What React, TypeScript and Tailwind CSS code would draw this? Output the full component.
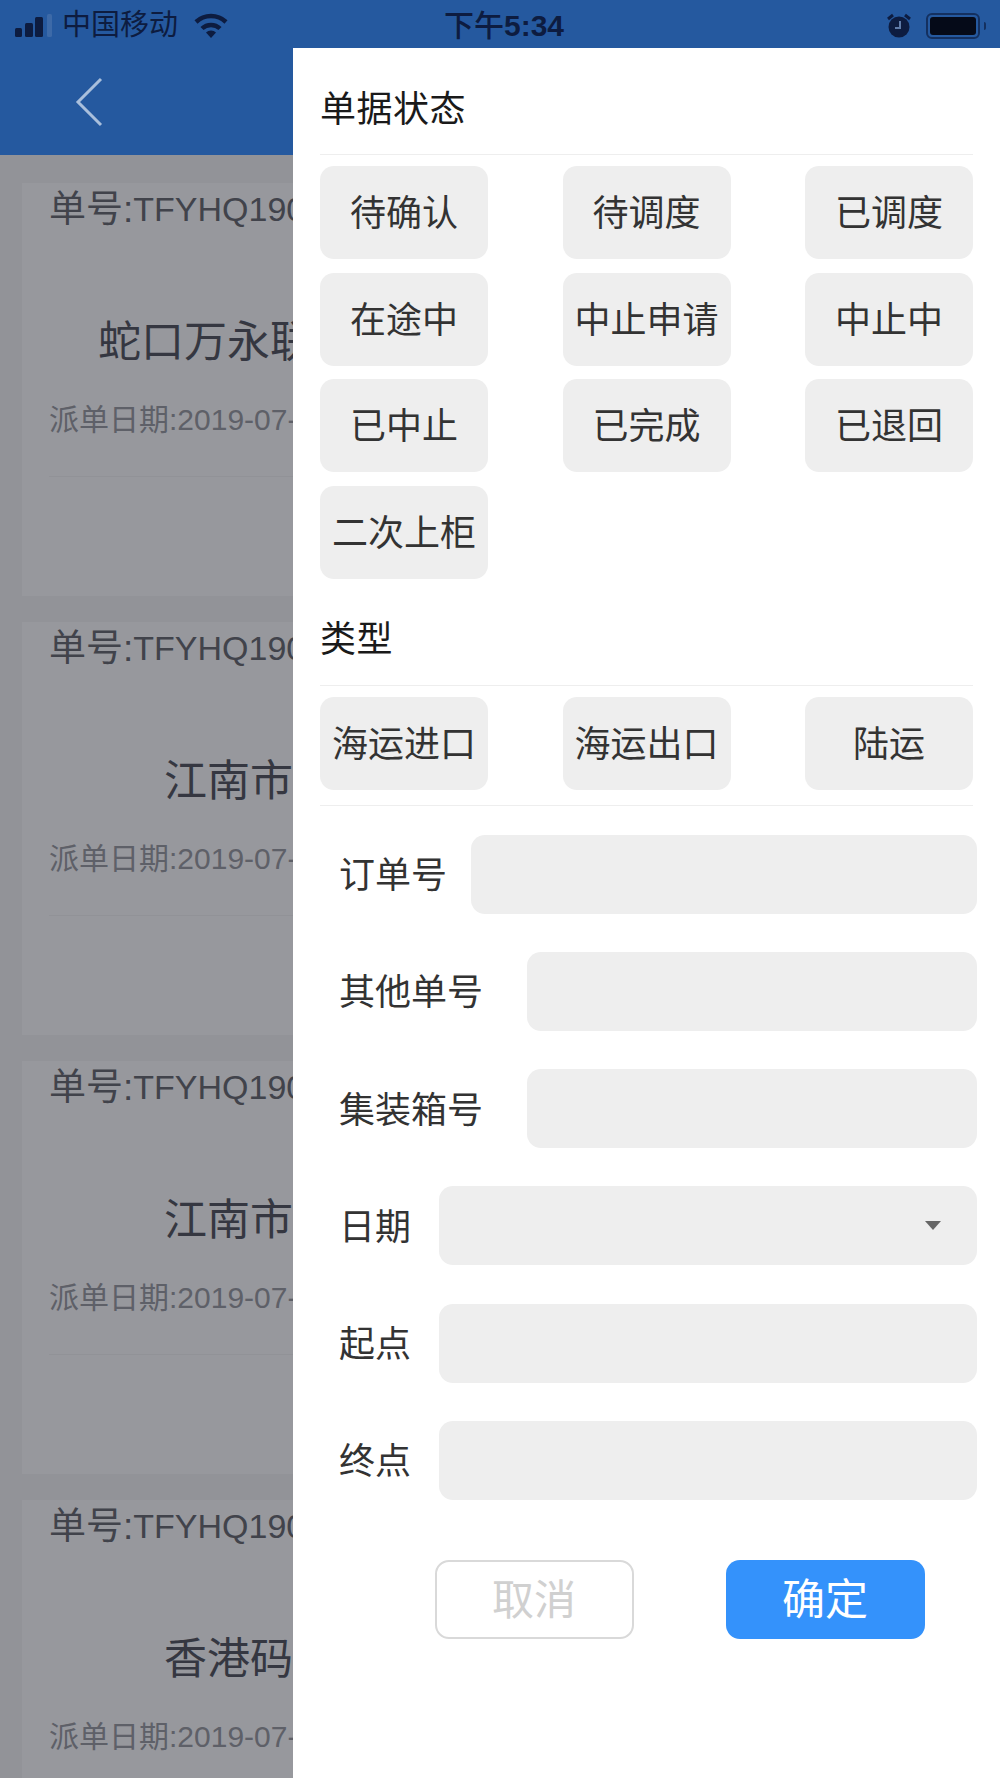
const font = { fontFamily: '"Liberation Sans", "Noto Sans CJK SC", sans-serif' };

const statusOptions = ['待确认', '待调度', '已调度', '在途中', '中止申请', '中止中', '已中止', '已完成', '已退回', '二次上柜'];
const typeOptions = ['海运进口', '海运出口', '陆运'];

const orders = [
  { no: 'TFYHQ190700123', place: '蛇口万永联合物流园区', indent: 'pl-[49px]' },
  { no: 'TFYHQ190700122', place: '江南市场货运中心', indent: 'pl-[115px]' },
  { no: 'TFYHQ190700121', place: '江南市场货运中心', indent: 'pl-[115px]' },
  { no: 'TFYHQ190700120', place: '香港码头', indent: 'pl-[115px]' },
];

const fields = [
  { label: '订单号', labelWidth: 'w-[132px]' },
  { label: '其他单号', labelWidth: 'w-[188px]' },
  { label: '集装箱号', labelWidth: 'w-[188px]' },
  { label: '日期', labelWidth: 'w-[100px]', select: true },
  { label: '起点', labelWidth: 'w-[100px]' },
  { label: '终点', labelWidth: 'w-[100px]' },
];

function StatusBar() {
  return (
    <div className="h-[48px] pt-[3px] bg-[#25599f] flex items-center text-[#0d1c40] pl-[15px] pr-[14px]">
      <svg width="37" height="24" viewBox="0 0 37 24" className="mr-[10px]">
        <rect x="0" y="14" width="7" height="9" rx="1.5" fill="#0d1c40" />
        <rect x="10" y="9" width="8" height="14" rx="1.5" fill="#0d1c40" />
        <rect x="20" y="3" width="8" height="20" rx="1.5" fill="#0d1c40" />
        <rect x="32" y="0" width="5" height="23" rx="1.5" fill="#3d6aa8" />
      </svg>
      <span className="text-[29px] leading-none">中国移动</span>
      <svg width="34" height="26" viewBox="0 0 34 26" className="ml-[16px]" fill="none" stroke="#0d1c40" strokeWidth="4.5">
        <path d="M2 9 A22 22 0 0 1 32 9" />
        <path d="M8 15.5 A13 13 0 0 1 26 15.5" />
        <path d="M17 25 L12 19.5 A7 7 0 0 1 22 19.5 Z" fill="#0d1c40" stroke="none" />
      </svg>
      <span className="flex-1 text-center text-[30px] font-medium leading-none pl-[38px] pr-[145px]">
        下午<span className="font-bold">5:34</span>
      </span>
      <svg width="24" height="26" viewBox="0 0 24 26" className="mr-[15px]">
        <circle cx="12" cy="14" r="10.5" fill="#0d1c40" />
        <path d="M13 8 V15 H8" fill="none" stroke="#5f7ba8" strokeWidth="2" />
        <path d="M1 6 L6 2 M23 6 L18 2" stroke="#0d1c40" strokeWidth="3" />
      </svg>
      <div className="w-[54px] h-[26px] rounded-[6px] border-2 border-[#14305f] p-[2px]">
        <div className="w-full h-full rounded-[3px] bg-[#050a18]" />
      </div>
      <div className="w-[2px] h-[8px] ml-[4px] rounded-r-sm bg-[#14305f]" />
    </div>
  );
}

function OrderCard({ order }: { order: (typeof orders)[number] }) {
  return (
    <div className="h-[413px] bg-[#97989d] mb-[26px] pl-[27px] whitespace-nowrap">
      <div className="h-[52px] flex items-center text-[37px] leading-none text-[#41434b]">
        单号:<span className="text-[34px]">{order.no}</span>
      </div>
      <div className={`mt-[86px] text-[43px] leading-none text-[#353741] ${order.indent}`}>{order.place}</div>
      <div className="mt-[41px] text-[30px] leading-none text-[#5e6068]">派单日期:2019-07-20</div>
      <div className="mt-[41px] border-t border-[#919297]" />
    </div>
  );
}

function OptionGrid({ items }: { items: string[] }) {
  return (
    <div className="grid grid-cols-[168px_168px_168px] gap-x-[74.5px] gap-y-[13.6px] pt-[11px]">
      {items.map((item) => (
        <button key={item} className="h-[93px] pt-[3px] rounded-[14px] bg-[#eeeeee] text-[36px] leading-none text-[#333333] whitespace-nowrap">
          {item}
        </button>
      ))}
    </div>
  );
}

function SectionTitle({ title }: { title: string }) {
  return (
    <div className="h-[107px] pt-[17px] flex items-center border-b border-[#eeeeee] text-[36px] tracking-[0.5px] leading-none text-[#1a1a1a]">
      {title}
    </div>
  );
}

export default function App() {
  return (
    <div className="w-[1000px] h-[1778px] overflow-hidden bg-[#929398]" style={font}>
      <StatusBar />
      <div className="flex h-[1730px]">
        <div className="w-[293px] shrink-0 overflow-hidden">
          <div className="h-[107px] bg-[#25599f] flex items-center pl-[74px]">
            <svg width="30" height="52" viewBox="0 0 30 52" fill="none" stroke="#a9bfdc" strokeWidth="3">
              <path d="M27 3 L4 26 L27 49" />
            </svg>
          </div>
          <div className="pt-[28px] pl-[22px] w-[1000px]">
            {orders.map((order) => (
              <OrderCard key={order.no} order={order} />
            ))}
          </div>
        </div>

        <div className="flex-1 bg-white">
          <div className="px-[27px]">
            <SectionTitle title="单据状态" />
            <OptionGrid items={statusOptions} />
            <SectionTitle title="类型" />
            <OptionGrid items={typeOptions} />
            <div className="mt-[15px] border-t border-[#eeeeee]" />
          </div>

          <div className="pl-[46px] pr-[23px] pt-[29px] flex flex-col gap-[38.2px]">
            {fields.map((field) => (
              <div key={field.label} className="flex items-center h-[79px]">
                <span className={`shrink-0 pt-[4px] text-[36px] leading-none text-[#333333] ${field.labelWidth}`}>{field.label}</span>
                <div className="flex-1 h-full rounded-[14px] bg-[#eeeeee] flex items-center justify-end pr-[36px]">
                  {field.select && (
                    <svg width="16" height="9" viewBox="0 0 16 9">
                      <path d="M0 0 H16 L8 9 Z" fill="#666666" />
                    </svg>
                  )}
                </div>
              </div>
            ))}
          </div>

          <div className="flex justify-center gap-[92px] pt-[60px] pl-[66px]">
            <button className="w-[199px] h-[79px] pt-[3px] rounded-[14px] border-2 border-[#d9d9d9] bg-white text-[42px] leading-none text-[#d0d0d0]">
              取消
            </button>
            <button className="w-[199px] h-[79px] pt-[3px] rounded-[14px] bg-[#3492fb] text-[43px] leading-none text-white">
              确定
            </button>
          </div>
        </div>
      </div>
    </div>
  );
}
